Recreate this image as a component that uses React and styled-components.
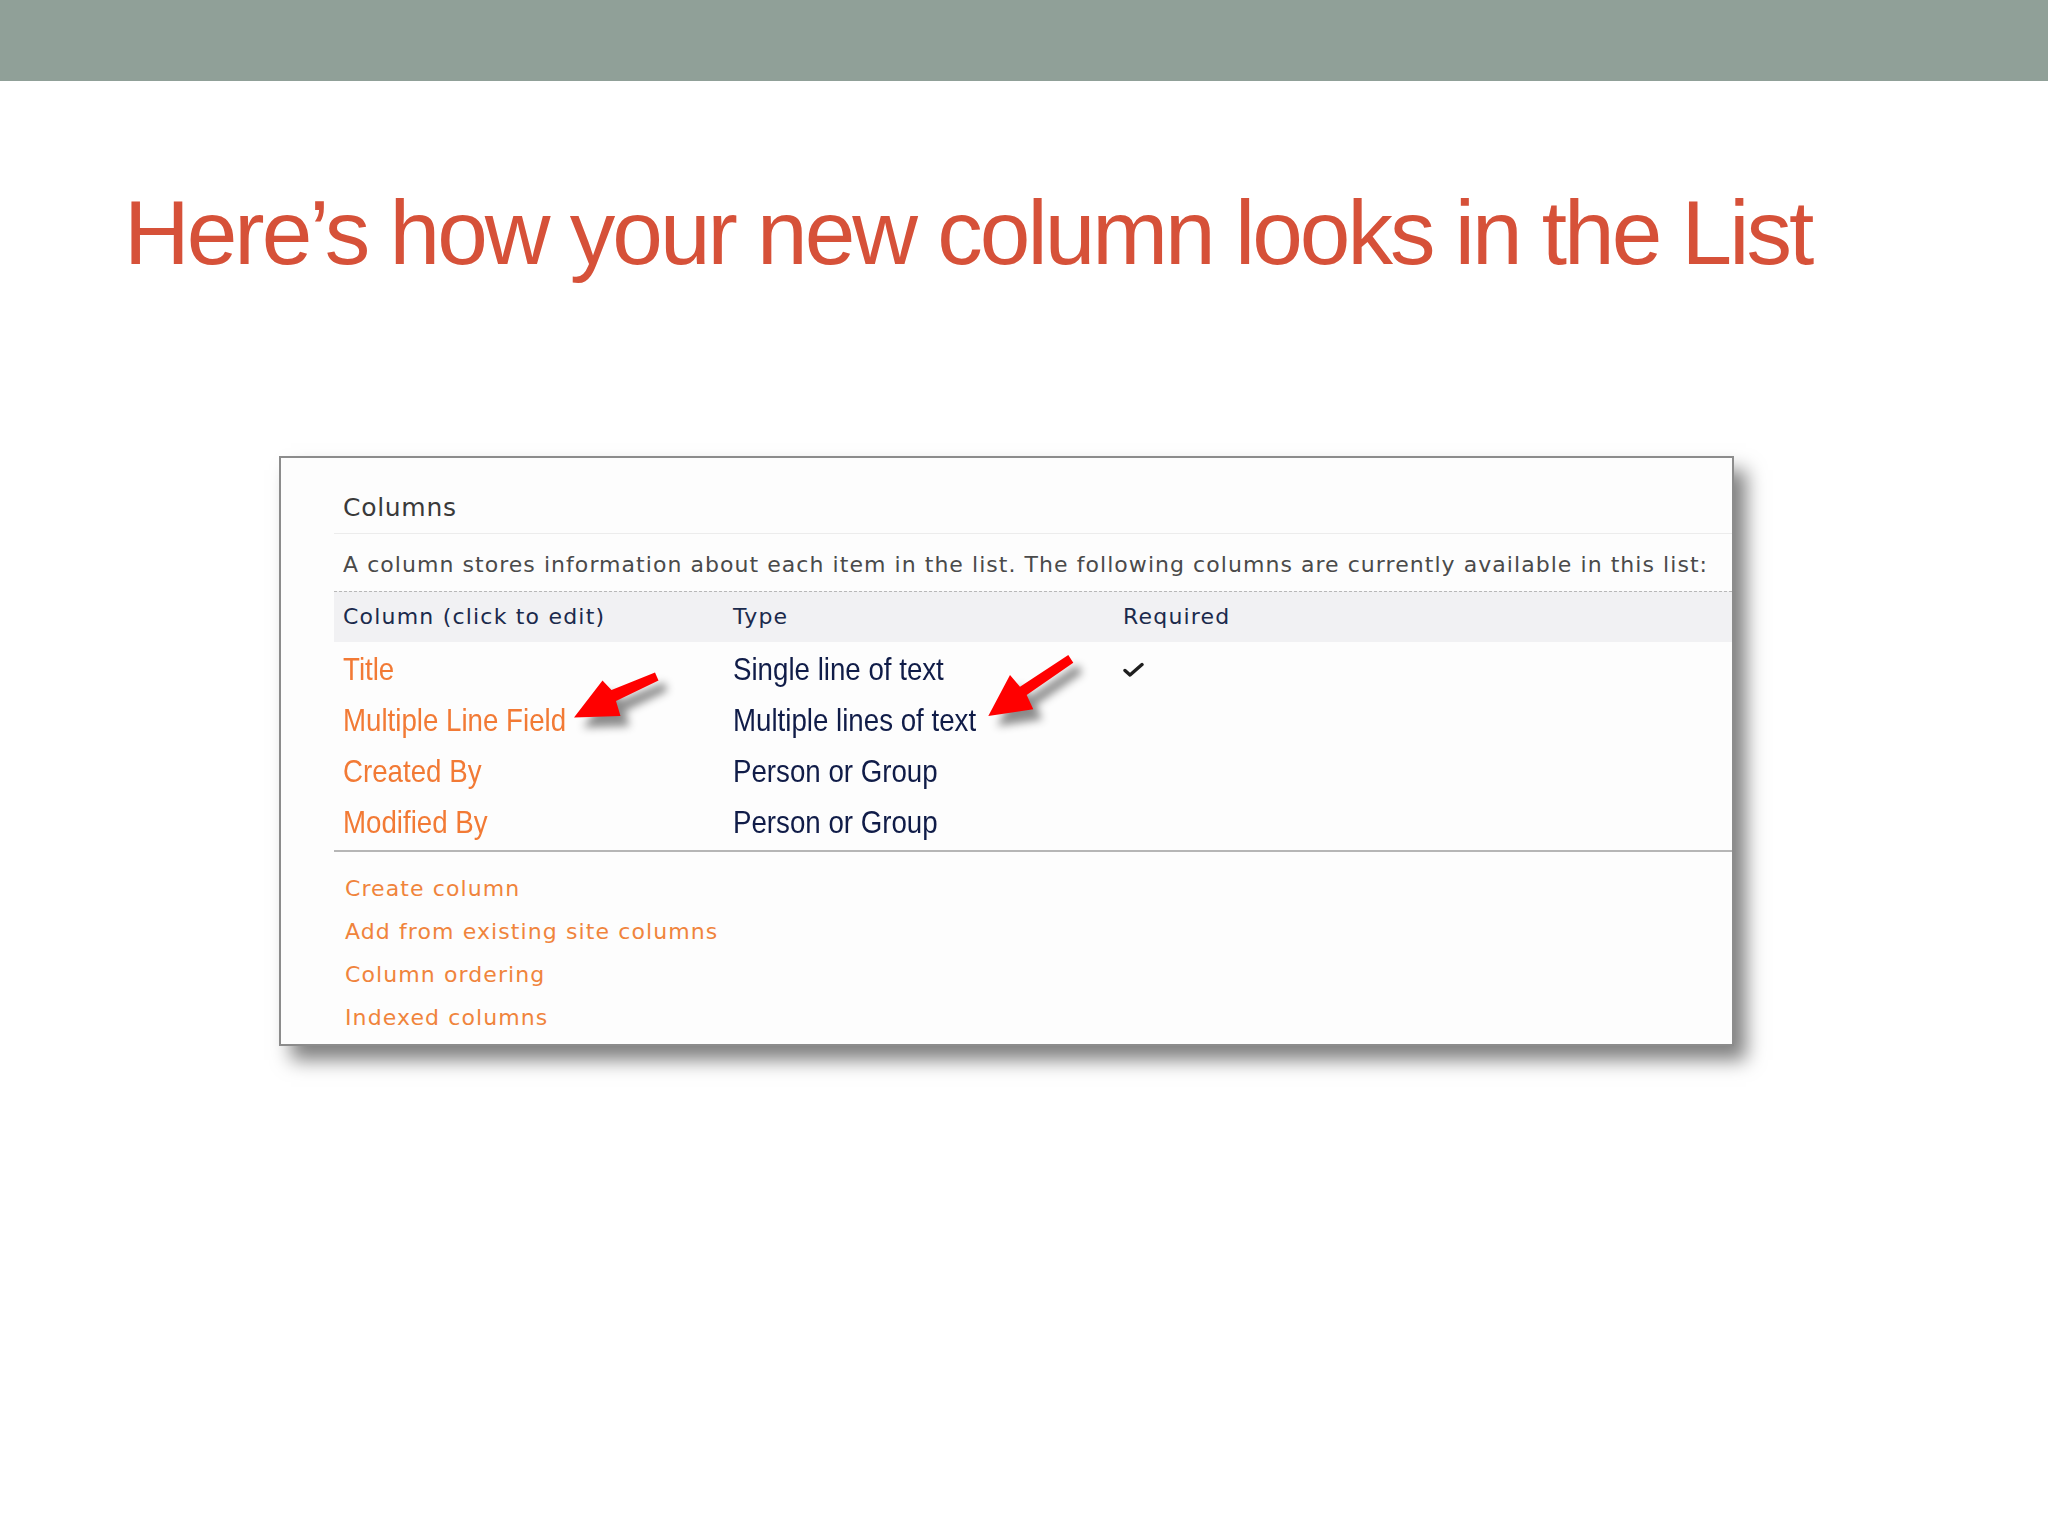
import React from 'react';
import styled, { createGlobalStyle } from 'styled-components';

const GlobalStyle = createGlobalStyle`
  html, body {
    margin: 0;
    padding: 0;
    background: #ffffff;
  }
  body {
    min-height: 1536px;
    font-family: "Liberation Sans", Arial, sans-serif;
  }
`;

const columns = [
  { name: 'Title', type: 'Single line of text', required: true },
  { name: 'Multiple Line Field', type: 'Multiple lines of text' },
  { name: 'Created By', type: 'Person or Group' },
  { name: 'Modified By', type: 'Person or Group' },
];

const links = [
  'Create column',
  'Add from existing site columns',
  'Column ordering',
  'Indexed columns',
];

const Arrow = ({ variant }) =>
  variant === 'left' ? (
    <ArrowSvg left={279} width="140" height="110" viewBox="0 0 140 110">
      <polygon points="14,77.5 42.5,40.5 51.5,50 95,32.5 98.5,40.5 56,61 60.5,76" />
    </ArrowSvg>
  ) : (
    <ArrowSvg left={699} width="200" height="110" viewBox="0 0 200 110">
      <polygon points="8.3,76 30,35 40,46.7 88.3,15 93.3,22.7 46.7,55 53.3,69.3" />
    </ArrowSvg>
  );

const Check = () => (
  <svg width="22" height="16" viewBox="0 0 22 16">
    <path
      d="M2 8.5 L7 13 L19 2.5"
      fill="none"
      stroke="#1f1f1f"
      strokeWidth="3.4"
      strokeLinecap="round"
      strokeLinejoin="round"
    />
  </svg>
);

const App = () => (
  <>
    <GlobalStyle />
    <TopBar />
    <Title>Here’s how your new column looks in the List</Title>
    <Panel>
      <Heading>Columns</Heading>
      <Description>
        A column stores information about each item in the list. The following
        columns are currently available in this list:
      </Description>
      <HeaderRow>
        <HeaderCell>Column (click to edit)</HeaderCell>
        <HeaderCell>Type</HeaderCell>
        <HeaderCell>Required</HeaderCell>
      </HeaderRow>
      <Rows>
        {columns.map(col => (
          <Row key={col.name}>
            <Cell link>
              <Narrow>{col.name}</Narrow>
            </Cell>
            <Cell>
              <Narrow>{col.type}</Narrow>
            </Cell>
            <Cell>{col.required && <Check />}</Cell>
          </Row>
        ))}
      </Rows>
      <Links>
        {links.map(link => (
          <LinkItem key={link}>{link}</LinkItem>
        ))}
      </Links>
      <Arrow variant="left" />
      <Arrow variant="right" />
    </Panel>
  </>
);

export default App;

const TopBar = styled.div`
  height: 81px;
  background: #90a098;
`;

const Title = styled.h1`
  margin: 106px 0 0 124px;
  font-family: "Liberation Sans", Arial, sans-serif;
  font-weight: normal;
  font-size: 91px;
  line-height: 91px;
  letter-spacing: -3px;
  color: #d65139;
  white-space: nowrap;
`;

const Panel = styled.div`
  position: relative;
  box-sizing: border-box;
  width: 1455px;
  margin: 178px 0 60px 279px;
  padding: 0 0 5px 53px;
  border: 2px solid #8c8c8c;
  background: #fdfdfd;
  box-shadow: 12px 14px 18px rgba(0, 0, 0, 0.5);
  font-family: "DejaVu Sans", Verdana, sans-serif;
`;

const Heading = styled.div`
  padding: 35px 0 10px 9px;
  font-size: 25px;
  line-height: 30px;
  letter-spacing: 0.7px;
  color: #3a3a3a;
  border-bottom: 1px solid #ececec;
`;

const Description = styled.div`
  padding: 18px 0 13px 9px;
  font-size: 22px;
  line-height: 26px;
  letter-spacing: 1.05px;
  color: #4a4a4a;
  white-space: nowrap;
`;

const grid = `
  display: grid;
  grid-template-columns: 390px 390px 1fr;
`;

const HeaderRow = styled.div`
  ${grid}
  height: 50px;
  align-items: center;
  background: #f1f1f3;
  border-top: 1px dashed #b8b8b8;
`;

const HeaderCell = styled.div`
  padding-left: 9px;
  font-size: 22px;
  line-height: 50px;
  letter-spacing: 1.2px;
  color: #1b2a4c;
`;

const Rows = styled.div`
  padding: 2px 0 2px;
  border-bottom: 2px solid #b6b6b6;
`;

const Row = styled.div`
  ${grid}
  height: 51px;
  align-items: center;
  font-family: "Liberation Sans", Arial, sans-serif;
  font-size: 32px;
`;

const Cell = styled.div`
  display: flex;
  align-items: center;
  padding-left: 9px;
  color: ${props => (props.link ? '#f27a35' : '#101c48')};
`;

const Narrow = styled.span`
  display: inline-block;
  white-space: nowrap;
  transform: scaleX(0.865);
  transform-origin: left center;
`;

const Links = styled.div`
  display: flex;
  flex-direction: column;
  padding: 15px 0 0 11px;
`;

const LinkItem = styled.div`
  font-size: 22px;
  line-height: 43px;
  letter-spacing: 1.1px;
  color: #f0843c;
`;

const ArrowSvg = styled.svg`
  position: absolute;
  top: 182px;
  left: ${props => props.left}px;
  overflow: visible;
  filter: drop-shadow(9px 10px 4px rgba(0, 0, 0, 0.45));

  polygon {
    fill: #ff0000;
  }
`;
